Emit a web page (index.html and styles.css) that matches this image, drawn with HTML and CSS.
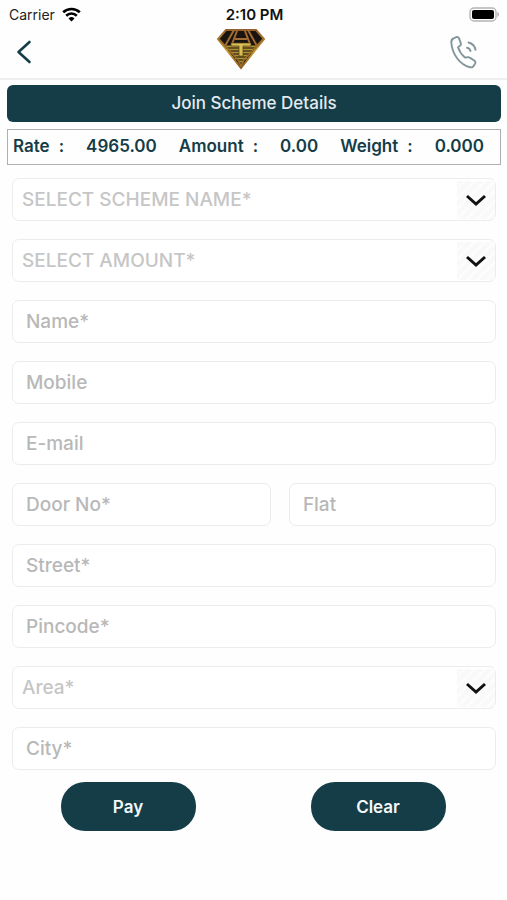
FILE: index.html
```html
<!DOCTYPE html>
<html lang="en">
<head>
<meta charset="utf-8">
<meta name="viewport" content="width=device-width, initial-scale=1">
<title>Join Scheme Details</title>
<link rel="stylesheet" href="styles.css">
</head>
<body>
<div class="status">
  <div class="carrier">
    <span>Carrier</span>
    <svg width="19" height="15" viewBox="0 0 19 15" fill="none" stroke="#000" stroke-width="2.6" aria-hidden="true">
      <path d="M1.2 5.3a12 12 0 0 1 16.6 0"/>
      <path d="M4.2 8.7a7.6 7.6 0 0 1 10.6 0"/>
      <path d="M9.5 14.4 6.5 11.4a4.3 4.3 0 0 1 6 0z" fill="#000" stroke="none"/>
    </svg>
  </div>
  <span class="time">2:10 PM</span>
  <svg class="battery" width="31" height="15" viewBox="0 0 31 15" aria-hidden="true">
    <rect x="1" y="1" width="26" height="13" rx="4" fill="#fff" stroke="#b4b4b4" stroke-width="1.4"/>
    <rect x="3" y="3" width="22" height="9" rx="2" fill="#000"/>
    <path d="M28.4 5v5q1.6-.8 1.6-2.5T28.4 5z" fill="#aaa"/>
  </svg>
</div>
<header class="topbar">
  <button class="icon-button back" type="button" aria-label="Back">
    <svg width="16" height="24" viewBox="0 0 16 24" fill="none" stroke="#143d47" stroke-width="2.6" stroke-linecap="round" stroke-linejoin="round"><path d="M13.5 2 2.500 12l11 10"/></svg>
  </button>
  <svg class="logo" width="50" height="42" viewBox="0 0 50 42" role="img" aria-label="Logo">
    <defs>
      <linearGradient id="gold" x1="0" y1="0" x2="0" y2="1">
        <stop offset="0" stop-color="#93602c"/><stop offset=".55" stop-color="#c49a35"/><stop offset="1" stop-color="#8c5a22"/>
      </linearGradient>
    </defs>
    <path d="M10 2h30l8 9L25 40 2 11z" fill="#19140f" stroke="url(#gold)" stroke-width="2"/>
    <path d="M12 17h26l5-1L25 37 7 16z" fill="#4a3a15"/>
    <path d="M9 18.500h32M11 21.500h28M14 24.500h22M17 27.500h16M19 30.500h12M22 33.500h6" stroke="#b29434" stroke-width="1.500"/>
    <path d="M18 2 9 18M32 2l9 16M21 3l-5 13M29 3l5 13M19 11h12" fill="none" stroke="#a36b32" stroke-width="2"/>
    <path d="M3 11 22 32l3 6 3-6 19-21" fill="none" stroke="#9b6b2a" stroke-width="1.600"/>
    <path d="M15 15h20v3h-8v10h-4V18h-8z" fill="#d9bd55" stroke="#53401a" stroke-width=".7"/>
  </svg>
  <button class="icon-button call" type="button" aria-label="Call">
    <svg width="28" height="34" viewBox="0 0 28 34" fill="none" stroke="#82959b" stroke-width="1.9" stroke-linecap="round" stroke-linejoin="round">
      <path d="M3.500 3.500 6.200 2.200q1.800-.8 2.700.9l1.900 5q.6 1.600-.8 2.700L8 12.300q2.200 6.400 7 10.200l2.400-.3q1.500-.3 2.700.7l4.500 2.900q1.500 1.200.6 2.700l-1.700 2.600q-1.200 1.700-3.400 1.200C10 29.800 2.200 19.500 1.300 7.500q-.2-3 2.200-4z"/>
      <path d="M17 12.700q2.800.4 3.500 3.300M18.500 7.500q5.800 1.400 7 7.200"/>
    </svg>
  </button>
</header>
<main>
  <h1 class="banner">Join Scheme Details</h1>
  <dl class="rates">
    <div><dt>Rate<span>:</span></dt><dd>4965.00</dd></div>
    <div><dt>Amount<span>:</span></dt><dd>0.00</dd></div>
    <div><dt>Weight<span>:</span></dt><dd>0.000</dd></div>
  </dl>
  <form class="form">
    <div class="fields">
      <div class="select">
        <select aria-label="Scheme name"><option>SELECT SCHEME NAME*</option></select>
        <svg class="chevron" viewBox="0 0 38 38" aria-hidden="true"><path d="m10 15 9 8 9-8"/></svg>
      </div>
      <div class="select">
        <select aria-label="Amount"><option>SELECT AMOUNT*</option></select>
        <svg class="chevron" viewBox="0 0 38 38" aria-hidden="true"><path d="m10 15 9 8 9-8"/></svg>
      </div>
      <input type="text" placeholder="Name*" aria-label="Name">
      <input type="tel" placeholder="Mobile" aria-label="Mobile">
      <input type="email" placeholder="E-mail" aria-label="E-mail">
      <div class="pair">
        <input type="text" placeholder="Door No*" aria-label="Door No">
        <input type="text" placeholder="Flat" aria-label="Flat">
      </div>
      <input type="text" placeholder="Street*" aria-label="Street">
      <input type="text" placeholder="Pincode*" aria-label="Pincode">
      <div class="select">
        <select aria-label="Area"><option>Area*</option></select>
        <svg class="chevron" viewBox="0 0 38 38" aria-hidden="true"><path d="m10 15 9 8 9-8"/></svg>
      </div>
      <input type="text" placeholder="City*" aria-label="City">
    </div>
    <div class="actions">
      <button type="submit">Pay</button>
      <button type="reset">Clear</button>
    </div>
  </form>
</main>
</body>
</html>
```

FILE: styles.css
```css
* {
  box-sizing: border-box;
}

body {
  margin: 0;
  background: #fefefe;
  color: #143d47;
  font-family: Inter, "Liberation Sans", sans-serif;
}

button,
input,
select {
  font-family: inherit;
}

.status {
  display: grid;
  grid-template-columns: 1fr auto 1fr;
  align-items: center;
  height: 28px;
  padding: 0 7px 0 9px;
  color: #222;
  font-size: 14px;
}

.carrier {
  display: flex;
  align-items: center;
  gap: 7px;
}

.time {
  color: #111;
  font-size: 15px;
  font-weight: 600;
}

.battery {
  justify-self: end;
}

.topbar {
  display: grid;
  grid-template-columns: 1fr auto 1fr;
  align-items: start;
  height: 52px;
  padding: 0 29px 0 4px;
  border-bottom: 2px solid #eee;
}

.icon-button {
  display: flex;
  align-items: center;
  justify-self: start;
  height: 48px;
  padding: 0;
  border: 0;
  background: none;
}

.back {
  padding-left: 12px;
}

.call {
  justify-self: end;
}

main {
  padding: 5px 6px 0 7px;
}

.banner {
  margin: 0;
  border-radius: 6px;
  background: #143d47;
  color: #e3eaf0;
  font-size: 17px;
  font-weight: 500;
  line-height: 37px;
  text-align: center;
}

.rates {
  display: flex;
  gap: 22px;
  margin: 7px 0 0;
  padding: 0 5px 2px;
  border: 1px solid #b0b0b0;
  font-size: 17px;
  font-weight: 600;
  line-height: 32px;
}

.rates div {
  display: flex;
  gap: 22px;
}

.rates dt {
  display: flex;
  gap: 9px;
}

.rates dd {
  margin: 0;
}

.form {
  padding: 13px 5px 0;
}

.fields {
  display: grid;
  gap: 18px;
}

.fields input,
.fields select {
  width: 100%;
  min-width: 0;
  height: 43px;
  margin: 0;
  padding: 0 13px;
  border: 1px solid #ececec;
  border-radius: 7px;
  background: #fff;
  color: #143d47;
  font-size: 19px;
  font-weight: 500;
}

.fields input::placeholder {
  color: #b8b8b8;
  opacity: 1;
}

.select {
  display: grid;
  align-items: center;
}

.select > * {
  grid-area: 1 / 1;
}

.fields select {
  appearance: none;
  padding: 0 40px 0 9px;
  color: #c6c6c6;
}

.chevron {
  justify-self: end;
  width: 38px;
  height: 38px;
  margin-right: 1px;
  background: repeating-linear-gradient(135deg, #f9f9f9 0 5px, #fdfdfd 5px 7px);
  fill: none;
  stroke: #111;
  stroke-width: 3;
  pointer-events: none;
}

.pair {
  display: grid;
  grid-template-columns: 5fr 4fr;
  gap: 18px;
}

.actions {
  display: grid;
  grid-template-columns: 1fr 1fr;
  justify-items: center;
  margin: 12px -7px 0 -9px;
}

.actions button {
  width: 135px;
  height: 49px;
  border: 0;
  border-radius: 24px;
  background: #143d47;
  color: #f4f8fa;
  font-size: 17px;
  font-weight: 600;
}
```
